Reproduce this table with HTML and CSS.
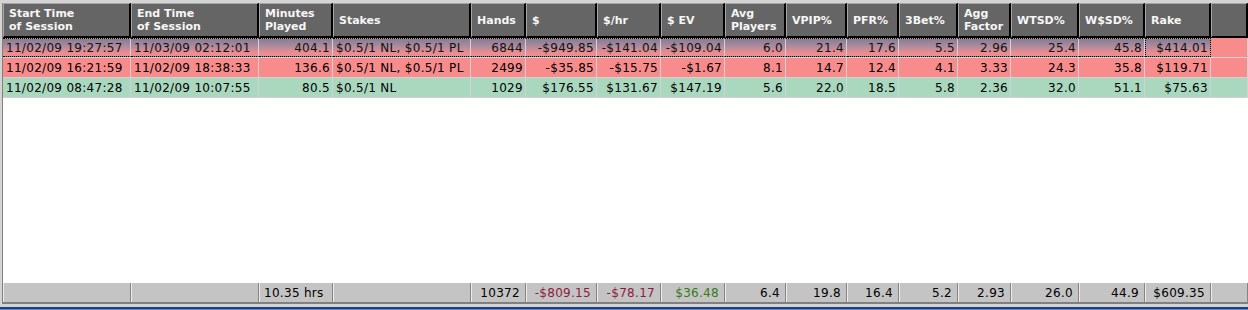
FILE: index.html
```html
<!DOCTYPE html>
<html>
<head>
<meta charset="utf-8">
<link rel="stylesheet" href="styles.css">
</head>
<body>
<div class="frame">
  <div class="grid head">
    <div class="hc">Start Time<br>of Session</div>
    <div class="hc">End Time<br>of Session</div>
    <div class="hc">Minutes<br>Played</div>
    <div class="hc">Stakes</div>
    <div class="hc">Hands</div>
    <div class="hc">$</div>
    <div class="hc">$/hr</div>
    <div class="hc">$ EV</div>
    <div class="hc">Avg<br>Players</div>
    <div class="hc">VPIP%</div>
    <div class="hc">PFR%</div>
    <div class="hc">3Bet%</div>
    <div class="hc">Agg<br>Factor</div>
    <div class="hc">WTSD%</div>
    <div class="hc">W$SD%</div>
    <div class="hc">Rake</div>
    <div class="hc"></div>
  </div>

  <div class="grid row sel">
    <div class="c l">11/02/09 19:27:57</div>
    <div class="c l">11/03/09 02:12:01</div>
    <div class="c">404.1</div>
    <div class="c l">$0.5/1 NL, $0.5/1 PL</div>
    <div class="c">6844</div>
    <div class="c">-$949.85</div>
    <div class="c">-$141.04</div>
    <div class="c">-$109.04</div>
    <div class="c">6.0</div>
    <div class="c">21.4</div>
    <div class="c">17.6</div>
    <div class="c">5.5</div>
    <div class="c">2.96</div>
    <div class="c">25.4</div>
    <div class="c">45.8</div>
    <div class="c focus">$414.01</div>
    <div class="c last"></div>
  </div>

  <div class="grid row loss">
    <div class="c l">11/02/09 16:21:59</div>
    <div class="c l">11/02/09 18:38:33</div>
    <div class="c">136.6</div>
    <div class="c l">$0.5/1 NL, $0.5/1 PL</div>
    <div class="c">2499</div>
    <div class="c">-$35.85</div>
    <div class="c">-$15.75</div>
    <div class="c">-$1.67</div>
    <div class="c">8.1</div>
    <div class="c">14.7</div>
    <div class="c">12.4</div>
    <div class="c">4.1</div>
    <div class="c">3.33</div>
    <div class="c">24.3</div>
    <div class="c">35.8</div>
    <div class="c">$119.71</div>
    <div class="c last"></div>
  </div>

  <div class="grid row win">
    <div class="c l">11/02/09 08:47:28</div>
    <div class="c l">11/02/09 10:07:55</div>
    <div class="c">80.5</div>
    <div class="c l">$0.5/1 NL</div>
    <div class="c">1029</div>
    <div class="c">$176.55</div>
    <div class="c">$131.67</div>
    <div class="c">$147.19</div>
    <div class="c">5.6</div>
    <div class="c">22.0</div>
    <div class="c">18.5</div>
    <div class="c">5.8</div>
    <div class="c">2.36</div>
    <div class="c">32.0</div>
    <div class="c">51.1</div>
    <div class="c">$75.63</div>
    <div class="c last"></div>
  </div>

  <div class="filler"></div>

  <div class="grid foot">
    <div class="fc"></div>
    <div class="fc"></div>
    <div class="fc l">10.35 hrs</div>
    <div class="fc"></div>
    <div class="fc">10372</div>
    <div class="fc neg">-$809.15</div>
    <div class="fc neg">-$78.17</div>
    <div class="fc pos">$36.48</div>
    <div class="fc">6.4</div>
    <div class="fc">19.8</div>
    <div class="fc">16.4</div>
    <div class="fc">5.2</div>
    <div class="fc">2.93</div>
    <div class="fc">26.0</div>
    <div class="fc">44.9</div>
    <div class="fc">$609.35</div>
    <div class="fc"></div>
  </div>
</div>
<div class="taskbar"></div>
</body>
</html>
```

FILE: styles.css
```css
html, body {
  margin: 0;
  padding: 0;
}
body {
  width: 1248px;
  height: 310px;
  overflow: hidden;
  background: #d4d4d4;
  display: flex;
  flex-direction: column;
  font-family: "DejaVu Sans", Verdana, sans-serif;
}
.frame {
  flex: 1;
  margin: 3px 0 3px 2px;
  border-left: 1px solid #808080;
  border-bottom: 2px solid #808080;
  background: #ffffff;
  display: flex;
  flex-direction: column;
  min-height: 0;
}
.grid {
  display: grid;
  grid-template-columns: 128px 128px 74px 138px 55px 71px 64px 64px 61px 61px 52px 59px 53px 68px 66px 66px 1fr;
}
.head {
  height: 35px;
}
.hc {
  box-sizing: border-box;
  background: #656565;
  border-top: 1px solid #a6a6a6;
  border-left: 1px solid #a6a6a6;
  border-right: 2px solid #000;
  border-bottom: 2px solid #000;
  color: #f6f6f6;
  font-weight: bold;
  font-size: 11px;
  line-height: 13px;
  padding-left: 5px;
  display: flex;
  align-items: center;
  white-space: nowrap;
  overflow: hidden;
}
.row {
  height: 20px;
  box-sizing: border-box;
  border-bottom: 1px solid #d2d2d2;
}
.c {
  box-sizing: border-box;
  border-right: 1px solid #d2d2d2;
  font-size: 12px;
  letter-spacing: 0.3px;
  color: #000;
  padding: 0 2px 0 3px;
  display: flex;
  align-items: center;
  justify-content: flex-end;
  white-space: nowrap;
  overflow: hidden;
}
.c.l {
  justify-content: flex-start;
}
.sel .c {
  background: linear-gradient(to bottom, #7f8098 0%, #b38a9c 45%, #e98d90 80%, #f48c8c 100%);
  border-top: 1px dotted #000;
  border-bottom: 1px dotted #000;
  color: #111;
}
.sel .c.last {
  background: #f88c8c;
  border-top: 1px solid #f88c8c;
  border-bottom: 1px solid #f88c8c;
}
.sel .c.focus {
  border-left: 1px dotted #000;
  border-right: 1px dotted #000;
}
.loss .c {
  background: #f88c8c;
}
.win .c {
  background: #aad8bf;
}
.filler {
  flex: 1;
}
.foot {
  height: 19px;
}
.fc {
  box-sizing: border-box;
  background: #c4c4c4;
  border-left: 1px solid #ececec;
  border-right: 1px solid #858585;
  font-size: 12px;
  letter-spacing: 0.3px;
  color: #000;
  padding: 0 5px 0 4px;
  display: flex;
  align-items: center;
  justify-content: flex-end;
  white-space: nowrap;
}
.fc.l {
  justify-content: flex-start;
}
.fc.neg {
  color: #8e1a3e;
}
.fc.pos {
  color: #3a7a16;
}
.taskbar {
  height: 1px;
  border-top: 2px solid #1f3d80;
  background: #5a8ad2;
}
```
